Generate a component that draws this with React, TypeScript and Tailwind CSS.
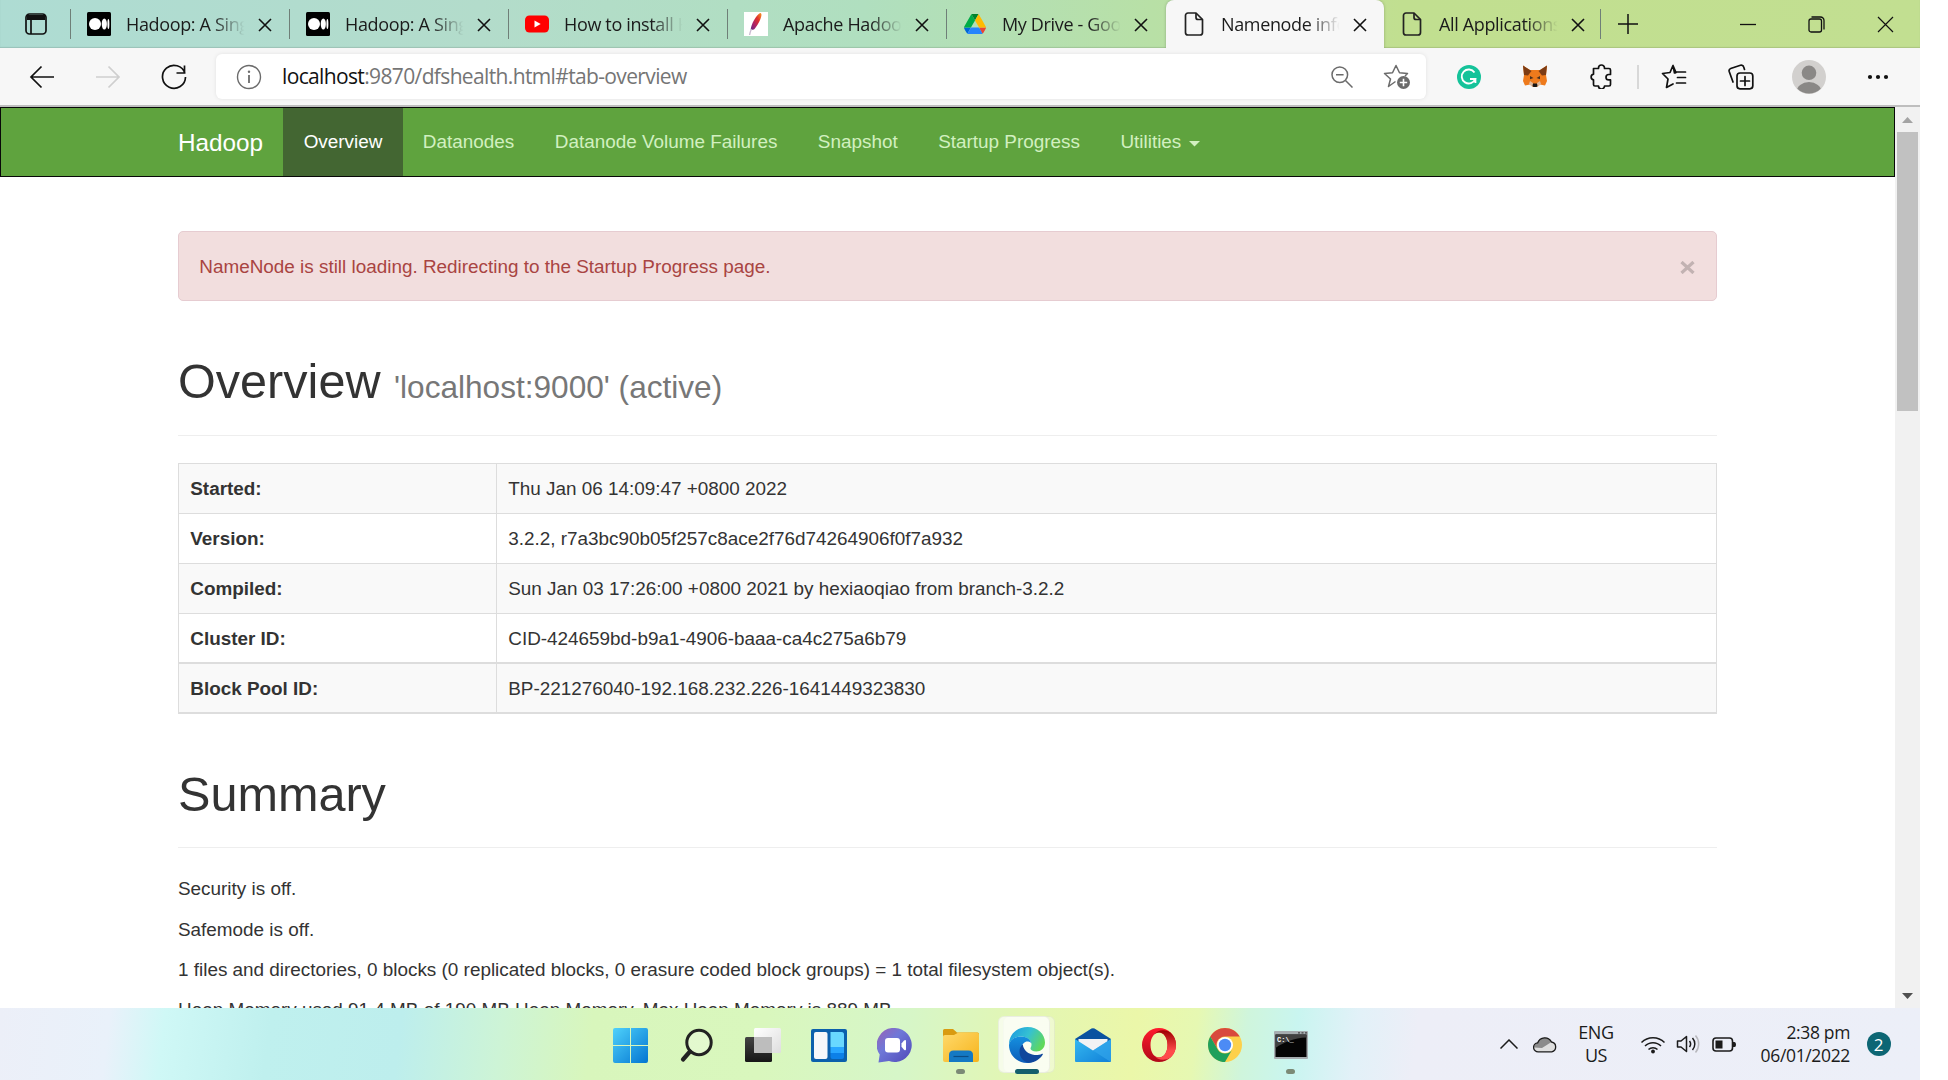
import type { ReactNode } from "react";

const segoe = "font-['Open_Sans','Noto_Sans',sans-serif]";

function MediumIcon() {
  return (
    <svg width="24" height="24" viewBox="0 0 24 24">
      <rect width="24" height="24" rx="1.5" fill="#000" />
      <ellipse cx="8" cy="12" rx="6" ry="6" fill="#fff" />
      <ellipse cx="17.3" cy="12" rx="2.6" ry="5.6" fill="#fff" />
      <ellipse cx="21.4" cy="12" rx="1" ry="5" fill="#fff" />
    </svg>
  );
}

function YoutubeIcon() {
  return (
    <svg width="24" height="24" viewBox="0 0 24 24">
      <rect y="3.5" width="24" height="17" rx="4.5" fill="#f00" />
      <path d="M9.5 8.500v7l6.200-3.500z" fill="#fff" />
    </svg>
  );
}

function ApacheIcon() {
  return (
    <svg width="24" height="24" viewBox="0 0 24 24">
      <defs>
        <linearGradient id="feather" x1="1" y1="0" x2="0" y2="1">
          <stop offset="0" stopColor="#f79a23" />
          <stop offset=".35" stopColor="#e0312c" />
          <stop offset=".7" stopColor="#a8216b" />
          <stop offset="1" stopColor="#5d2a84" />
        </linearGradient>
      </defs>
      <rect width="24" height="24" fill="#fff" />
      <path d="M16.500 1c-3 1-6.500 6.500-8.500 11.500-.8 2-1.300 4-1.200 5.500l3.200-.5c3-3 7-10 7.500-14.500 0-1-.3-2-1-2z" fill="url(#feather)" />
      <path d="M7.500 17c-1 2-1.600 3.800-1.900 6" stroke="#c9b9d0" strokeWidth="1.300" fill="none" />
    </svg>
  );
}

function DriveIcon() {
  return (
    <svg width="22" height="20" viewBox="0 0 87.3 78" preserveAspectRatio="none">
      <path d="m6.600 66.850 3.850 6.650c.8 1.400 1.950 2.500 3.300 3.300l13.750-23.800h-27.500c0 1.550.4 3.100 1.200 4.500z" fill="#0066da" />
      <path d="m43.650 25-13.750-23.800c-1.350.8-2.500 1.900-3.300 3.300l-25.400 44a9.060 9.060 0 0 0 -1.200 4.500h27.500z" fill="#00ac47" />
      <path d="m73.550 76.800c1.350-.8 2.500-1.900 3.300-3.300l1.600-2.750 7.650-13.250c.8-1.400 1.200-2.950 1.200-4.500h-27.502l5.852 11.500z" fill="#ea4335" />
      <path d="m43.650 25 13.750-23.800c-1.350-.8-2.900-1.200-4.500-1.200h-18.500c-1.600 0-3.150.45-4.500 1.200z" fill="#00832d" />
      <path d="m59.800 53h-32.300l-13.750 23.800c1.350.8 2.900 1.200 4.500 1.200h50.800c1.600 0 3.150-.45 4.500-1.200z" fill="#2684fc" />
      <path d="m73.400 26.500-12.700-22c-.8-1.400-1.950-2.500-3.300-3.300l-13.750 23.800 16.150 28h27.450c0-1.550-.4-3.100-1.200-4.500z" fill="#ffba00" />
    </svg>
  );
}

function PageIcon() {
  return (
    <svg width="20" height="24" viewBox="0 0 20 24" fill="none" stroke="#222" strokeWidth="1.700" strokeLinejoin="round">
      <path d="M12 1H4a2.500 2.500 0 0 0-2.500 2.500v17A2.500 2.500 0 0 0 4 23h12a2.500 2.500 0 0 0 2.500-2.500V7.500z" />
      <path d="M12 1v4.500a2 2 0 0 0 2 2h4.500" />
    </svg>
  );
}

function CloseIcon() {
  return (
    <svg width="14" height="14" viewBox="0 0 14 14" stroke="#111" strokeWidth="1.600">
      <path d="M1 1l12 12M13 1L1 13" />
    </svg>
  );
}

function Tab({ icon, title, active, divider = true, width = "w-[219px]" }: { icon: ReactNode; title: string; active?: boolean; divider?: boolean; width?: string }) {
  return (
    <div className={`flex h-12 shrink-0 items-center pl-4 ${width} ${active ? "rounded-t-lg bg-[#f7f7f7] shadow-[0_0_3px_rgba(0,0,0,0.25)]" : ""}`}>
      <span className="flex w-6 shrink-0 justify-center">{icon}</span>
      <span className="ml-[15px] w-[121px] shrink-0 overflow-hidden whitespace-nowrap text-[18px] leading-6 tracking-[-0.35px] text-[#1b1b1b] [mask-image:linear-gradient(to_right,#000_72%,transparent_98%)]">
        {title}
      </span>
      <span className="ml-[11px] pt-px"><CloseIcon /></span>
      {divider && <span className="ml-auto h-[30px] w-px bg-[#6f7f78]" />}
    </div>
  );
}

function TabStrip() {
  return (
    <div className="flex h-12 items-center bg-[linear-gradient(90deg,#aedcd3_0%,#b3dccb_25%,#b0dfbf_45%,#b8e0a6_60%,#c1df90_73%,#c2df91_100%)] shadow-[inset_0_-1px_1px_rgba(0,0,0,0.12)]">
      <div className="flex w-[70px] shrink-0 items-center justify-center pl-[2px]">
        <svg width="22" height="22" viewBox="0 0 22 22" fill="none" stroke="#111" strokeWidth="1.700">
          <rect x="1" y="1" width="20" height="20" rx="3.500" />
          <path d="M2 4.500h18" strokeWidth="5" />
          <path d="M6 5v16" />
        </svg>
      </div>
      <span className="h-[30px] w-px bg-[#6f7f78]" />
      <Tab icon={<MediumIcon />} title="Hadoop: A Single" />
      <Tab icon={<MediumIcon />} title="Hadoop: A Single" />
      <Tab icon={<YoutubeIcon />} title="How to install Hadoop" />
      <Tab icon={<ApacheIcon />} title="Apache Hadoop" />
      <Tab icon={<DriveIcon />} title="My Drive - Google" divider={false} />
      <Tab icon={<PageIcon />} title="Namenode information" active divider={false} width="w-[218px]" />
      <Tab icon={<PageIcon />} title="All Applications" width="w-[217px]" />
      <div className="flex w-[54px] justify-center">
        <svg width="22" height="22" viewBox="0 0 22 22" stroke="#111" strokeWidth="1.500">
          <path d="M11 1v20M1 11h20" />
        </svg>
      </div>
      <div className="ml-auto flex items-center">
        <span className="flex w-[69px] justify-center">
          <svg width="16" height="16" viewBox="0 0 16 16" stroke="#111" strokeWidth="1.300"><path d="M0 8.500h16" /></svg>
        </span>
        <span className="flex w-[69px] justify-center">
          <svg width="17" height="17" viewBox="0 0 17 17" fill="none" stroke="#111" strokeWidth="1.300">
            <rect x="1" y="3" width="12.500" height="13" rx="2" />
            <path d="M3.500 1h9A3.500 3.500 0 0 1 16 4.500v9" />
          </svg>
        </span>
        <span className="flex w-[69px] justify-center">
          <svg width="17" height="17" viewBox="0 0 17 17" stroke="#111" strokeWidth="1.200"><path d="M1 1l15 15M16 1L1 16" /></svg>
        </span>
      </div>
    </div>
  );
}

function Slot({ children, className = "w-[66px]" }: { children: ReactNode; className?: string }) {
  return <span className={`flex shrink-0 items-center justify-center ${className}`}>{children}</span>;
}

function Toolbar() {
  return (
    <div className="flex h-[57px] items-center bg-[#f7f7f7] pl-[9px]">
      <Slot>
        <svg width="26" height="24" viewBox="0 0 26 24" fill="none" stroke="#111" strokeWidth="1.700">
          <path d="M25 12H2M12.500 1.500L2 12l10.500 10.500" />
        </svg>
      </Slot>
      <Slot>
        <svg width="26" height="24" viewBox="0 0 26 24" fill="none" stroke="#cfcfcf" strokeWidth="1.700">
          <path d="M1 12h23M13.500 1.500L24 12 13.500 22.500" />
        </svg>
      </Slot>
      <Slot>
        <svg width="26" height="26" viewBox="0 0 26 26" fill="none" stroke="#111" strokeWidth="1.700">
          <path d="M24 9.500A11.500 11.500 0 1 0 24.500 13M23.500 1.500v7.500h-8" />
        </svg>
      </Slot>
      <div className="ml-[9px] flex h-[45px] w-[1210px] items-center rounded-md bg-white shadow-[0_0_4px_rgba(0,0,0,0.09)]">
        <Slot>
          <svg width="26" height="26" viewBox="0 0 26 26" fill="none" stroke="#6b6b6b" strokeWidth="1.400">
            <circle cx="13" cy="13" r="11.500" />
            <path d="M13 11v8" strokeWidth="1.800" />
            <circle cx="13" cy="7.800" r="1.200" fill="#6b6b6b" stroke="none" />
          </svg>
        </Slot>
        <span className="whitespace-nowrap pb-px text-[21px] leading-7 tracking-[-0.640px] text-[#757575]">
          <span className="text-[#111]">localhost</span>:9870/dfshealth.html#tab-overview
        </span>
        <div className="ml-auto flex">
          <Slot className="w-[54px] pl-[2px]">
            <svg width="22" height="22" viewBox="0 0 22 22" fill="none" stroke="#6b6b6b" strokeWidth="1.500">
              <circle cx="8.800" cy="8.800" r="7.800" />
              <path d="M14.500 14.500l7 7M5 8.800h7.600" />
            </svg>
          </Slot>
          <Slot className="w-[58px]">
            <svg width="28" height="26" viewBox="0 0 28 26" fill="none" stroke="#6b6b6b" strokeWidth="1.500" strokeLinejoin="round">
              <path d="M12.500 17.500L5.500 22.500 7.500 15 1.500 9.500l8-.7L13 1.500l3.500 7.300 8 .7-2.500 2.500" />
              <circle cx="20.500" cy="18.500" r="6.500" fill="#6b6b6b" stroke="none" />
              <path d="M20.500 14.800v7.400M16.800 18.500h7.400" stroke="#fff" strokeWidth="1.600" />
            </svg>
          </Slot>
        </div>
      </div>
      <div className="ml-[10px] flex items-center">
        <Slot>
          <svg width="24" height="24" viewBox="0 0 24 24" fill="none" stroke="#fff" strokeWidth="1.900">
            <circle cx="12" cy="12" r="12" fill="#15c39a" stroke="none" />
            <path d="M17.500 7.500A7 7 0 1 0 18.300 14H13M18.400 18v-4" />
          </svg>
        </Slot>
        <Slot>
          <svg width="24" height="23" viewBox="0 0 24 23">
            <path d="M0 .5l7 4.500h10L24 .5l-1 9.500 1 6-2 4.500-5-1-3 2.500h-4l-3-2.500-5 1L0 16l1-6z" fill="#ee7a1c" />
            <path d="M0 .5L8.500 6 5 10.500l-4-.5zM24 .5L15.500 6l3.500 4.500 4-.5z" fill="#7d3c14" />
            <path d="M7 11l3.500 2-3.500 1.200zM17 11l-3.500 2 3.500 1.200z" fill="#4a3120" />
            <path d="M7 16l3 2v3.500H9l-3-2.500zM17 16l-3 2v3.500h1l3-2.500z" fill="#e0b89a" />
            <path d="M10 18.500h4l.5 2.500-1 1h-3l-1-1z" fill="#161616" />
          </svg>
        </Slot>
        <Slot>
          <svg width="24" height="25" viewBox="0 0 24 25" fill="none" stroke="#111" strokeWidth="1.700" strokeLinejoin="round">
            <path d="M4.500 4.500h5V4a3 3 0 0 1 6 0v.5h4.500a1.500 1.500 0 0 1 1.500 1.500v4.500h-1.800a2.700 2.700 0 0 0 0 5.400h1.800v4.600a1.500 1.500 0 0 1-1.500 1.500h-4.500a3 3 0 0 1-6 0H6a1.500 1.500 0 0 1-1.500-1.500v-4.600a2.900 2.900 0 0 1 0-5.700z" />
          </svg>
        </Slot>
        <span className="ml-[3px] mr-[2px] h-6 w-[2px] bg-[#d8d8d8]" />
        <Slot>
          <svg width="26" height="25" viewBox="0 0 26 25" fill="none" stroke="#111" strokeWidth="1.700" strokeLinejoin="round" strokeLinecap="round">
            <path d="M14 9h-.5L12 1.500 9 8.500 1.500 9.500 7 15 5.500 23.500l6.500-3.500M12 1.500l3 7" />
            <path d="M15.500 8h9M16.500 13.500h8M15.500 19h9" />
          </svg>
        </Slot>
        <Slot className="w-[67px]">
          <svg width="26" height="26" viewBox="0 0 26 26" fill="none" stroke="#111" strokeWidth="1.700" strokeLinecap="round" strokeLinejoin="round">
            <path d="M5 18L1.200 7.500A2.500 2.500 0 0 1 2.700 4.500L12.500 1.300A2.500 2.500 0 0 1 15.700 3l.8 2.500" />
            <rect x="9" y="9" width="15.800" height="15.800" rx="3" />
            <path d="M17 12.500v9M12.500 17h9" />
          </svg>
        </Slot>
        <Slot className="w-[69px]">
          <svg width="34" height="34" viewBox="0 0 34 34">
            <defs><clipPath id="avatar"><circle cx="17" cy="17" r="16.500" /></clipPath></defs>
            <circle cx="17" cy="17" r="17" fill="#d2d0ce" />
            <g clipPath="url(#avatar)" fill="#8a8886">
              <circle cx="17" cy="12.800" r="7.300" />
              <ellipse cx="17" cy="32" rx="12.500" ry="10" />
            </g>
          </svg>
        </Slot>
        <Slot className="w-[70px]">
          <svg width="22" height="6" viewBox="0 0 22 6" fill="#111">
            <circle cx="3" cy="3" r="2.100" /><circle cx="11" cy="3" r="2.100" /><circle cx="19" cy="3" r="2.100" />
          </svg>
        </Slot>
      </div>
    </div>
  );
}

const navItems = ["Overview", "Datanodes", "Datanode Volume Failures", "Snapshot", "Startup Progress"];

function Navbar() {
  return (
    <nav className="flex h-[70px] border border-[#080808] bg-[#5fa33e] pl-[177px] text-[18.9px] leading-[27px] text-[#d2f0c0]">
      <a className="pr-[20.250px] pt-[21px] text-[24.3px] text-white">Hadoop</a>
      {navItems.map((item, i) => (
        <a key={item} className={`whitespace-nowrap px-[20.250px] pt-5 ${i === 0 ? "bg-[#436632] text-white" : ""}`}>{item}</a>
      ))}
      <a className="flex px-[20.250px] pt-5">
        Utilities
        <svg className="ml-2 mt-[13px]" width="11" height="6" viewBox="0 0 11 6" fill="#d2f0c0"><path d="M0 0h11L5.500 5.500z" /></svg>
      </a>
    </nav>
  );
}

const rows = [
  ["Started:", "Thu Jan 06 14:09:47 +0800 2022", "h-[50px] border-t bg-[#f9f9f9]"],
  ["Version:", "3.2.2, r7a3bc90b05f257c8ace2f76d74264906f0f7a932", "h-[50px] border-t"],
  ["Compiled:", "Sun Jan 03 17:26:00 +0800 2021 by hexiaoqiao from branch-3.2.2", "h-[50px] border-t bg-[#f9f9f9]"],
  ["Cluster ID:", "CID-424659bd-b9a1-4906-baaa-ca4c275a6b79", "h-[49px] border-t"],
  ["Block Pool ID:", "BP-221276040-192.168.232.226-1641449323830", "h-[52px] border-y-2 bg-[#f9f9f9]"],
];

function Content() {
  return (
    <main className="ml-[178px] w-[1539px] text-[18.9px] leading-[27px] text-[#333]">
      <div className="mt-[54px] flex h-[70px] items-center justify-between rounded-[5px] border border-[#e6ccd1] bg-[#f2dede] pl-[20.250px] pr-[21px] text-[#a94442]">
        <span>NameNode is still loading. Redirecting to the Startup Progress page.</span>
        <svg className="mt-[2px]" width="15" height="13" viewBox="0 0 15 13" stroke="#c2b2b2" strokeWidth="3.200"><path d="M1.500 1l12 11M13.500 1l-12 11" /></svg>
      </div>
      <h1 className="mb-[27px] mt-[53px] h-[82px] border-b border-[#eee] text-[48.6px] leading-[54px]">
        Overview <small className="text-[31.600px] text-[#777]">'localhost:9000' (active)</small>
      </h1>
      <div>
        {rows.map(([label, value, style]) => (
          <div key={label} className={`flex border-x border-[#ddd] ${style}`}>
            <div className="w-[318px] border-r border-[#ddd] pl-[11.250px] pt-[11px] font-bold">{label}</div>
            <div className="pl-[11.250px] pt-[11px]">{value}</div>
          </div>
        ))}
      </div>
      <h1 className="mb-[27px] mt-[53px] h-[81px] border-b border-[#eee] text-[48.6px] leading-[54px]">Summary</h1>
      <p className="mb-[13.500px]">Security is off.</p>
      <p className="mb-[13.500px]">Safemode is off.</p>
      <p className="mb-[13px]">1 files and directories, 0 blocks (0 replicated blocks, 0 erasure coded block groups) = 1 total filesystem object(s).</p>
      <p>Heap Memory used 91.4 MB of 190 MB Heap Memory. Max Heap Memory is 889 MB.</p>
    </main>
  );
}

function Scrollbar() {
  return (
    <div className="flex w-[25px] flex-col items-center bg-[#f1f1f1]">
      <svg className="mt-[10px]" width="11" height="6" viewBox="0 0 11 6" fill="#a3a3a3"><path d="M0 6h11L5.500 0z" /></svg>
      <div className="mt-[9px] h-[279px] w-[21px] bg-[#c1c1c1]" />
      <svg className="mb-[9px] mt-auto" width="11" height="6" viewBox="0 0 11 6" fill="#505050"><path d="M0 0h11L5.500 6z" /></svg>
    </div>
  );
}

function TaskbarApp({ children, mark }: { children: ReactNode; mark?: "idle" | "active" }) {
  return (
    <div className="relative flex h-[72px] w-[66px] items-center justify-center pt-[2px]">
      {mark === "active" && (
        <>
          <span className="absolute left-[9px] top-2 h-[57px] w-[52px] rounded-md border border-black/5 bg-white/40" />
          <span className="absolute left-[4px] top-2 h-[57px] w-[52px] rounded-md border border-black/5 bg-white/70" />
        </>
      )}
      <span className="relative">{children}</span>
      {mark === "idle" && <span className="absolute left-[28px] top-[61px] h-[5px] w-[9px] rounded-full bg-[#7b8a76]" />}
      {mark === "active" && <span className="absolute left-[21px] top-[61px] h-[5px] w-6 rounded-full bg-[#145f6c]" />}
    </div>
  );
}

function Gradients() {
  return (
    <svg width="0" height="0" className="absolute">
      <defs>
        <linearGradient id="win" gradientUnits="userSpaceOnUse" x1="0" y1="0" x2="36" y2="36"><stop offset="0" stopColor="#4fd2fb" /><stop offset="1" stopColor="#0072d0" /></linearGradient>
        <linearGradient id="dark" x1="0" y1="0" x2="0" y2="1"><stop offset="0" stopColor="#444" /><stop offset="1" stopColor="#161616" /></linearGradient>
        <linearGradient id="light" x1="0" y1="0" x2="1" y2="1"><stop offset="0" stopColor="#fff" /><stop offset="1" stopColor="#dedede" /></linearGradient>
        <linearGradient id="chat" x1="0" y1="0" x2="1" y2="1"><stop offset="0" stopColor="#9a62b4" /><stop offset=".4" stopColor="#6f78d8" /><stop offset="1" stopColor="#4f48b8" /></linearGradient>
        <linearGradient id="folder" x1="0" y1="0" x2="1" y2="1"><stop offset="0" stopColor="#ffd96b" /><stop offset="1" stopColor="#f6b41c" /></linearGradient>
        <linearGradient id="edgeTop" x1="0" y1=".2" x2="1" y2=".6"><stop offset="0" stopColor="#1c9be0" /><stop offset=".5" stopColor="#35c1d2" /><stop offset="1" stopColor="#62d957" /></linearGradient>
        <linearGradient id="edgeMid" x1="0" y1="0" x2="0" y2="1"><stop offset="0" stopColor="#1590df" /><stop offset="1" stopColor="#0c5cb8" /></linearGradient>
        <linearGradient id="mail" x1="0" y1="0" x2="1" y2="1"><stop offset="0" stopColor="#35b8f0" /><stop offset="1" stopColor="#1180d8" /></linearGradient>
        <linearGradient id="opera" x1="0" y1="0" x2="0" y2="1"><stop offset="0" stopColor="#ff1b2d" /><stop offset="1" stopColor="#b00818" /></linearGradient>
        <linearGradient id="operaR" x1="0" y1="0" x2="0" y2="1"><stop offset="0" stopColor="#9c0000" /><stop offset=".7" stopColor="#ff4b4b" /></linearGradient>
      </defs>
    </svg>
  );
}

function TaskbarApps() {
  return (
    <>
      <TaskbarApp>
        <svg width="35" height="35" viewBox="0 0 35 35" fill="url(#win)"><path d="M0 2a2 2 0 0 1 2-2h15v17H0zM18 0h15a2 2 0 0 1 2 2v15H18zM0 18h17v17H2a2 2 0 0 1-2-2zM18 18h17v15a2 2 0 0 1-2 2H18z" /></svg>
      </TaskbarApp>
      <TaskbarApp>
        <svg width="34" height="35" viewBox="0 0 34 35" fill="none" stroke="#222" strokeLinecap="round"><circle cx="19" cy="14.500" r="12.200" strokeWidth="3" fill="#ffffff44" /><path d="M10 23.500L3 31.500" strokeWidth="4.200" /></svg>
      </TaskbarApp>
      <TaskbarApp>
        <svg width="36" height="35" viewBox="0 0 36 35"><rect y="9" width="27" height="25" rx="1.500" fill="url(#dark)" /><rect x="9" width="27" height="25" rx="1.500" fill="url(#light)" /><path d="M9 9h18v16H10.500A1.500 1.500 0 0 1 9 23.500z" fill="#bdbdbd" /></svg>
      </TaskbarApp>
      <TaskbarApp>
        <svg width="36" height="33" viewBox="0 0 36 33"><rect width="36" height="33" rx="2" fill="#0b60ac" /><rect x="3" y="3" width="13.500" height="27" rx="2" fill="#f5f7fa" /><path d="M19.500 3h11a2.500 2.500 0 0 1 2.500 2.500V18H19.500z" fill="#69d8ff" /><path d="M19.500 18H33v6H19.500z" fill="#28a6ff" /><path d="M19.500 24H33v4a2 2 0 0 1-2 2H21.500a2 2 0 0 1-2-2z" fill="#0c80e8" /></svg>
      </TaskbarApp>
      <TaskbarApp>
        <svg width="36" height="35" viewBox="0 0 36 35"><path d="M18 0a17 17 0 1 1-6 33L1.500 34.500l1.200-8A17 17 0 0 1 18 0z" fill="url(#chat)" /><rect x="8" y="10" width="15" height="14.500" rx="3" fill="#fff" /><path d="M24.500 15.500l2.500-3q2-1.500 2 .8v7.600q0 2.200-2 .8l-2.500-3z" fill="#fff" /></svg>
      </TaskbarApp>
      <TaskbarApp mark="idle">
        <svg width="36" height="33" viewBox="0 0 36 33"><path d="M0 1.500A1.500 1.500 0 0 1 1.500 0H10l4 3.500h20.500A1.500 1.500 0 0 1 36 5v6H0z" fill="#d99b10" /><path d="M0 7.500Q0 6 2 6h9l4.500-2.500H34a2 2 0 0 1 2 2V31a2 2 0 0 1-2 2H2a2 2 0 0 1-2-2z" fill="url(#folder)" /><path d="M6 33v-7q0-4.500 4.500-4.500h15q4.500 0 4.500 4.500v7z" fill="#1479c4" /><path d="M10.500 27.500h15" stroke="#0b4d86" strokeWidth="1.200" /></svg>
      </TaskbarApp>
      <TaskbarApp mark="active">
        <svg width="36" height="36" viewBox="0 0 36 36">
          <path d="M0 18C0 7 8 0 18.500 0 29 0 36 7.500 36 15.500c0 6-4.500 9-8.500 9-4 0-6-1.500-6-3 0-1 1-1.500 1-4 0-4-4.500-8-10.500-8C5.500 9.500 1 13.500 0 18z" fill="url(#edgeTop)" />
          <path d="M0 18C1 12.500 6 9.500 12 9.500c5 0 9.500 2.800 10.300 6.500-2-1.500-4-1.800-5.500-1.300-2.500 1-4.200 3.500-4.200 7 0 7 5.400 12.300 12.400 12.300-2.300 1.400-4.500 2-7 2C8 36 0 28 0 18z" fill="url(#edgeMid)" />
          <path d="M13.800 17.500c-2.200 1.500-3.300 4-3.300 7 0 5.500 3.500 10.500 10 11.300 5.500-.5 10.500-3.500 13.300-8.300.3-.7-.2-1-.8-.8-2.500 1.300-5 1.600-7.500 1.300-6-.8-11-4.500-11.700-10.500z" fill="#10479c" />
        </svg>
      </TaskbarApp>
      <TaskbarApp>
        <svg width="36" height="34" viewBox="0 0 36 34"><path d="M0 11L16.500.6q1.500-.9 3 0L36 11v10H0z" fill="#0a52a0" /><path d="M3.500 11h29v8L18 24 3.500 19z" fill="#f2f2f4" /><path d="M0 11l18 11.500L36 11v22q0 1-1 1H1q-1 0-1-1z" fill="url(#mail)" /><path d="M18 22.500L36 11v21.500q0 1-1 1z" fill="#35a9ec" opacity=".6" /></svg>
      </TaskbarApp>
      <TaskbarApp>
        <svg width="36" height="36" viewBox="0 0 36 36"><path fillRule="evenodd" d="M18 1a17 17 0 1 1 0 34 17 17 0 0 1 0-34zm0 4.500c-5 0-8.500 5.500-8.500 12.500S13 30.500 18 30.500 26.500 25 26.500 18 23 5.500 18 5.500z" fill="url(#opera)" /><path d="M12.500 8.500C14 6.500 16 5.500 18 5.500c5 0 8.500 5.500 8.500 12.500S23 30.500 18 30.500c-2 0-4-1-5.500-3C16 33 23 34.500 29.500 30.600a17 17 0 0 0 0-25.200C23 1.500 16 3 12.500 8.500z" fill="url(#operaR)" /></svg>
      </TaskbarApp>
      <TaskbarApp>
        <svg width="34" height="34" viewBox="0 0 34 34"><circle cx="17" cy="17" r="17" fill="#fdd04a" /><path d="M2.300 8.500a17 17 0 0 1 29.400 0H17a8.500 8.500 0 0 0-7.400 12.700z" fill="#d8493e" /><path d="M2.300 8.500l7.300 12.700A8.500 8.500 0 0 0 24.400 21.200L17 34A17 17 0 0 1 2.300 8.500z" fill="#1fa05c" /><circle cx="17" cy="17" r="8" fill="#fff" /><circle cx="17" cy="17" r="6.200" fill="#4c8bf5" /></svg>
      </TaskbarApp>
      <TaskbarApp mark="idle">
        <svg width="34" height="28" viewBox="0 0 34 28"><rect width="34" height="28" rx="1" fill="#a6adb0" /><rect x="1.500" y="3.500" width="31" height="22.500" fill="#050505" /><path d="M1.500 3.500h31v3C20 7 10 11 1.500 17z" fill="#414141" /><path d="M24 1.800h2m1.500 0h2m1.500 0h2" stroke="#444" strokeWidth="1.200" /><text x="3" y="11" fontSize="7" fontWeight="700" fill="#fff" fontFamily="Liberation Mono">C:\_</text></svg>
      </TaskbarApp>
    </>
  );
}

function Taskbar() {
  return (
    <footer className={`flex h-[72px] shrink-0 items-center bg-[linear-gradient(97deg,#eceff8_0px,#e9f1fa_110px,#cff8f6_165px,#bff0ee_270px,#bdeeed_400px,#cdf4d6_500px,#d8f6bc_590px,#d9f7bd_760px,#d6f6c8_900px,#e2f6b4_1010px,#ebf7a9_1130px,#e6f8b2_1190px,#cff5dc_1240px,#c9f5f0_1290px,#e2f1f8_1350px,#edeef7_1410px,#eceff8_1920px)] ${segoe}`}>
      <Gradients />
      <div className="ml-[597.500px] flex"><TaskbarApps /></div>
      <div className="ml-[176.500px] flex items-center text-[#1b1b1b]">
        <svg width="18" height="10" viewBox="0 0 18 10" fill="none" stroke="#1b1b1b" strokeWidth="1.500"><path d="M.5 9.500L9 1l8.500 8.500" /></svg>
        <svg className="ml-[15px]" width="24" height="17" viewBox="0 0 24 17">
          <path d="M5.500 15.800a4.500 4.500 0 0 1-.8-9A7.500 7.500 0 0 1 18.500 6a5 5 0 0 1 .3 9.800z" fill="#dedede" />
          <path d="M1 11.500a4.500 4.500 0 0 1 3.700-4.700A7.500 7.500 0 0 1 18.500 6L9 12z" fill="#8b8b8b" />
          <path d="M5.500 15.800a4.500 4.500 0 0 1-.8-9A7.500 7.500 0 0 1 18.500 6a5 5 0 0 1 .3 9.800z" fill="none" stroke="#1b1b1b" strokeWidth="1.300" />
        </svg>
        <div className="ml-[18px] w-[42px] text-center text-[18px] leading-[23px] tracking-[-0.4px]">ENG<br />US</div>
        <svg className="ml-[23px]" width="26" height="19" viewBox="0 0 26 19" fill="none" stroke="#1b1b1b" strokeWidth="1.500">
          <path d="M1.500 7.500a16.300 16.300 0 0 1 23 0M5 11a11.300 11.300 0 0 1 16 0M8.500 14.500a6.400 6.400 0 0 1 9 0" /><circle cx="13" cy="16.500" r="1.900" fill="#1b1b1b" stroke="none" />
        </svg>
        <svg className="ml-[10px]" width="26" height="20" viewBox="0 0 26 20" fill="none" stroke="#1b1b1b" strokeWidth="1.500" strokeLinejoin="round">
          <path d="M1.500 7v6H5l5.500 4.500v-15L5 7zM13.500 7a5 5 0 0 1 0 6M16.500 4a9 9 0 0 1 0 12" /><path d="M19.500 1.500a13 13 0 0 1 0 17" stroke="#b8b8bd" />
        </svg>
        <svg className="ml-[10px]" width="25" height="15" viewBox="0 0 25 15"><rect x="1" y="1" width="19.500" height="13" rx="3" fill="none" stroke="#1b1b1b" strokeWidth="1.600" /><rect x="3.500" y="3.500" width="7" height="8" fill="#1b1b1b" /><path d="M21 5h1.500q1.500 0 1.500 2.500T22.500 10H21z" fill="#1b1b1b" /></svg>
        <div className="ml-[17px] w-[96px] whitespace-nowrap text-right text-[17.500px] leading-[23px] tracking-[-0.35px]">2:38 pm<br />06/01/2022</div>
        <span className="ml-[16.500px] flex h-6 w-6 items-center justify-center rounded-full bg-[#0d6674] text-[17px] leading-none text-white">2</span>
      </div>
    </footer>
  );
}

export default function App() {
  return (
    <div className="h-[1080px] w-full overflow-hidden bg-white">
      <div className={`flex h-[1080px] w-[1920px] flex-col overflow-hidden ${segoe}`}>
        <TabStrip />
        <Toolbar />
        <div className="h-[2px] shrink-0 bg-[#bebebe]" />
        <div className="flex h-[901px] shrink-0 overflow-hidden">
          <div className="w-[1895px] overflow-hidden font-['Liberation_Sans',Arial,sans-serif]">
            <Navbar />
            <Content />
          </div>
          <Scrollbar />
        </div>
        <Taskbar />
      </div>
    </div>
  );
}
